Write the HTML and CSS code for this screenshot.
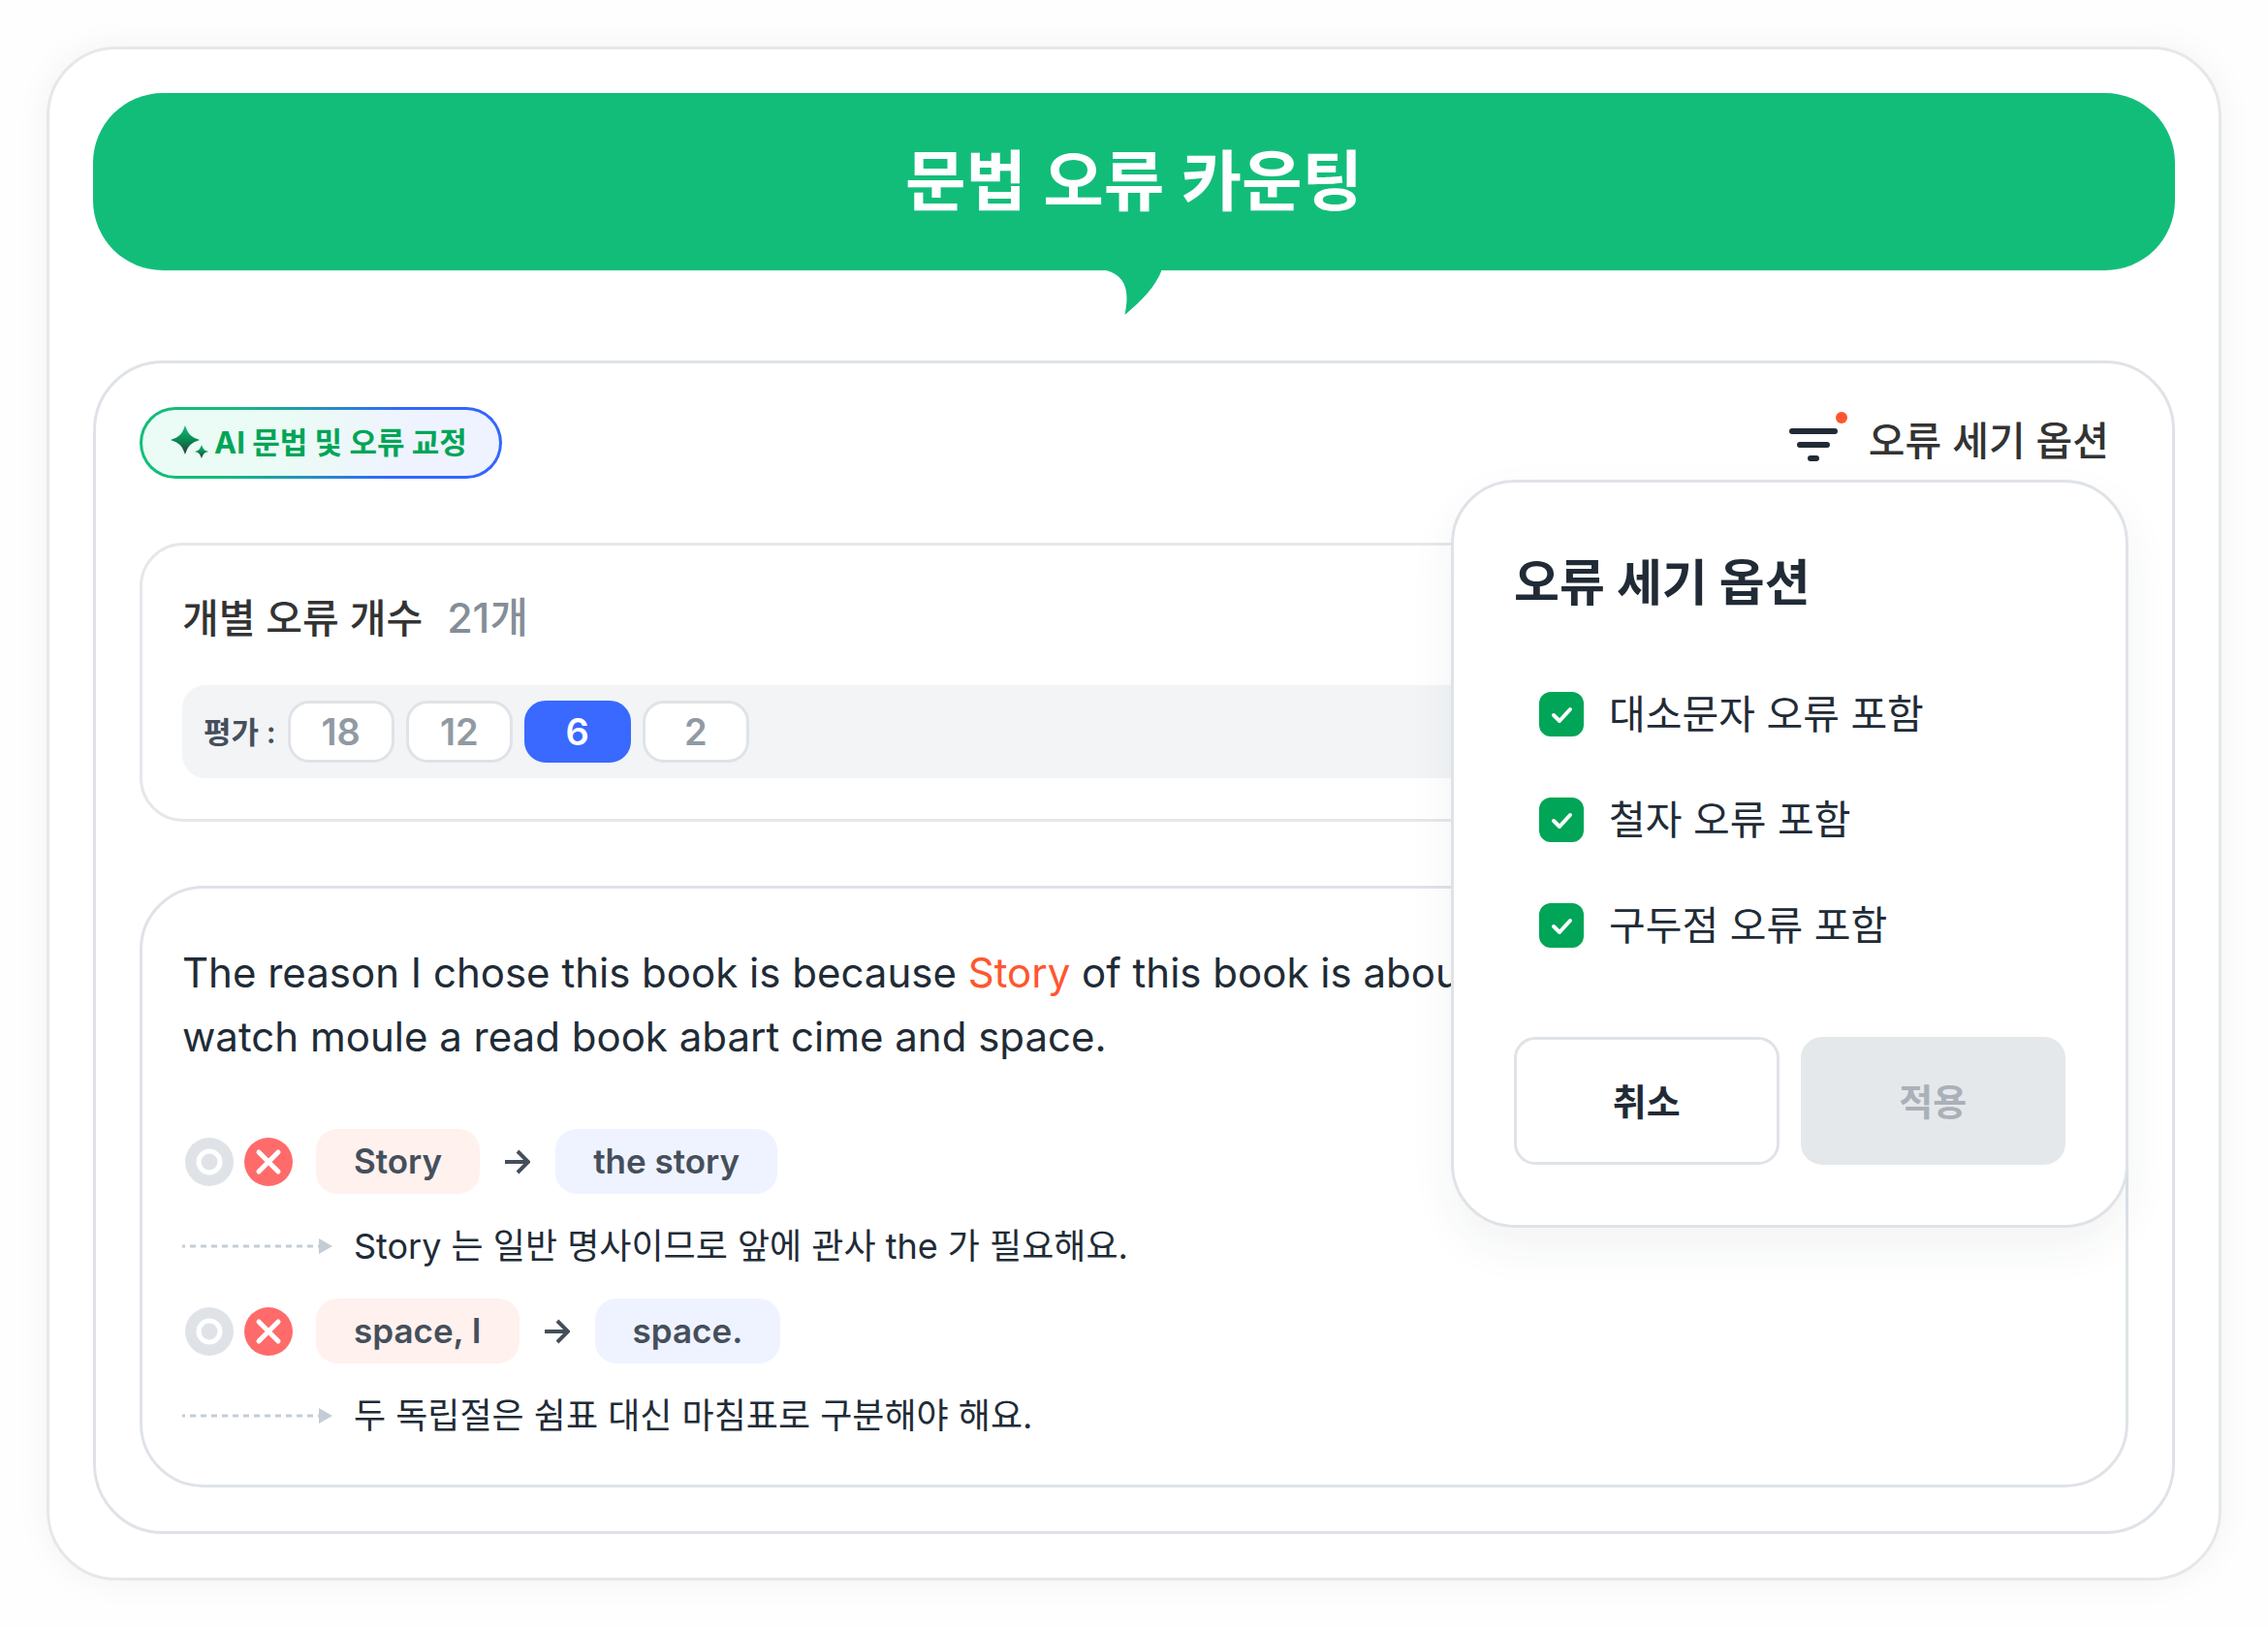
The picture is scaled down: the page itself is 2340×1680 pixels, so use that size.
FILE: index.html
```html
<!DOCTYPE html>
<html lang="ko">
<head>
    <meta charset="UTF-8">
    <meta name="viewport" content="width=device-width, initial-scale=1.0">
    <title>문법 오류 카운팅</title>
    <link rel="stylesheet" href="styles.css">
</head>

<body>
    <main class="frame">
        <header class="banner">
            <h1>문법 오류 카운팅</h1>
            <svg class="banner-tail" width="57" height="46" viewBox="0 0 57 46" aria-hidden="true">
                <path d="M0 0C14 4 21 13 21 29C21 35 20 40 19 46C37 31 51 16 57 0Z" fill="#12bd7a"/>
            </svg>
        </header>

        <section class="panel">
            <div class="toolbar">
                <div class="ai-badge">
                    <svg width="40" height="36" viewBox="0 0 40 36" aria-hidden="true">
                        <defs>
                            <linearGradient id="spark" x1="0" y1="0" x2="0" y2="1">
                                <stop offset="0" stop-color="#12bd7a"/>
                                <stop offset="0.5" stop-color="#078a52"/>
                                <stop offset="1" stop-color="#34373e"/>
                            </linearGradient>
                        </defs>
                        <path d="M15 0C18 9 21 12 30 15C21 18 18 21 15 30C12 21 9 18 0 15C9 12 12 9 15 0Z" fill="url(#spark)"/>
                        <path d="M32 20C34 25 35 26 39 27C35 28 34 29 32 34C30 29 29 28 25 27C29 26 30 25 32 20Z" fill="url(#spark)"/>
                    </svg>
                    <span>AI 문법 및 오류 교정</span>
                </div>

                <button type="button" class="option-toggle">
                    <svg width="60" height="52" viewBox="0 0 60 52" aria-hidden="true">
                        <path d="M3 20H47M11 34H39M22 48H28" stroke="#212b36" stroke-width="6" stroke-linecap="round"/>
                        <circle cx="54" cy="6" r="6" fill="#ff5630"/>
                    </svg>
                    오류 세기 옵션
                </button>

                <form class="option-popover">
                    <h2>오류 세기 옵션</h2>
                    <div class="option-list">
                        <label class="option">
                            <input type="checkbox" checked>
                            <svg width="46" height="46" viewBox="0 0 46 46" aria-hidden="true"><path d="M15 24L21 30L32 18"/></svg>
                            <span>대소문자 오류 포함</span>
                        </label>
                        <label class="option">
                            <input type="checkbox" checked>
                            <svg width="46" height="46" viewBox="0 0 46 46" aria-hidden="true"><path d="M15 24L21 30L32 18"/></svg>
                            <span>철자 오류 포함</span>
                        </label>
                        <label class="option">
                            <input type="checkbox" checked>
                            <svg width="46" height="46" viewBox="0 0 46 46" aria-hidden="true"><path d="M15 24L21 30L32 18"/></svg>
                            <span>구두점 오류 포함</span>
                        </label>
                    </div>
                    <div class="option-actions">
                        <button type="button" class="cancel-button">취소</button>
                        <button type="submit" class="apply-button" disabled>적용</button>
                    </div>
                </form>
            </div>

            <section class="count-card">
                <h2>개별 오류 개수 <span class="count-total">21개</span></h2>
                <div class="score-bar">
                    <span class="score-label">평가 :</span>
                    <button type="button" class="score">18</button>
                    <button type="button" class="score">12</button>
                    <button type="button" class="score selected">6</button>
                    <button type="button" class="score">2</button>
                </div>
            </section>

            <section class="text-card">
                <p class="essay">The reason I chose this book is because <span class="error">Story</span> of this book is about<br>
                watch moule a read book abart cime and space.</p>

                <div class="correction">
                    <button type="button" class="mark" aria-label="맞음">
                        <svg width="50" height="50" viewBox="0 0 50 50"><circle cx="25" cy="25" r="25" fill="#dfe3e8"/><circle cx="25" cy="25" r="11" fill="none" stroke="#fff" stroke-width="5"/></svg>
                    </button>
                    <button type="button" class="mark" aria-label="틀림">
                        <svg width="50" height="50" viewBox="0 0 50 50"><circle cx="25" cy="25" r="25" fill="#ff6b6b"/><path d="M15 15L35 35M35 15L15 35" stroke="#fff" stroke-width="5" stroke-linecap="round"/></svg>
                    </button>
                    <span class="word before">Story</span>
                    <svg class="arrow" width="26" height="26" viewBox="0 0 26 26" aria-hidden="true"><path d="M0 13H24M13 2L24 13L13 24"/></svg>
                    <span class="word after">the story</span>
                </div>
                <p class="reason">
                    <svg width="155" height="16" viewBox="0 0 155 16" aria-hidden="true"><path d="M0 8H141" stroke="#c4cdd5" stroke-width="3" stroke-dasharray="6 5" stroke-dashoffset="3"/><path d="M141 0L155 8L141 16Z" fill="#c4cdd5"/></svg>
                    <span>Story 는 일반 명사이므로 앞에 관사 the 가 필요해요.</span>
                </p>

                <div class="correction">
                    <button type="button" class="mark" aria-label="맞음">
                        <svg width="50" height="50" viewBox="0 0 50 50"><circle cx="25" cy="25" r="25" fill="#dfe3e8"/><circle cx="25" cy="25" r="11" fill="none" stroke="#fff" stroke-width="5"/></svg>
                    </button>
                    <button type="button" class="mark" aria-label="틀림">
                        <svg width="50" height="50" viewBox="0 0 50 50"><circle cx="25" cy="25" r="25" fill="#ff6b6b"/><path d="M15 15L35 35M35 15L15 35" stroke="#fff" stroke-width="5" stroke-linecap="round"/></svg>
                    </button>
                    <span class="word before">space, I</span>
                    <svg class="arrow" width="26" height="26" viewBox="0 0 26 26" aria-hidden="true"><path d="M0 13H24M13 2L24 13L13 24"/></svg>
                    <span class="word after">space.</span>
                </div>
                <p class="reason">
                    <svg width="155" height="16" viewBox="0 0 155 16" aria-hidden="true"><path d="M0 8H141" stroke="#c4cdd5" stroke-width="3" stroke-dasharray="6 5" stroke-dashoffset="3"/><path d="M141 0L155 8L141 16Z" fill="#c4cdd5"/></svg>
                    <span>두 독립절은 쉼표 대신 마침표로 구분해야 해요.</span>
                </p>
            </section>
        </section>
    </main>
</body>
</html>
```
FILE: styles.css
```css
* {
    box-sizing: border-box;
}

body {
    margin: 0;
    padding: 48px;
    background-color: #fefefe;
    color: #212b36;
    font-family: Inter, "Noto Sans CJK KR", sans-serif;
}

h1, h2, p {
    margin: 0;
}

button {
    font-family: inherit;
    padding: 0;
    border: none;
    background: none;
    cursor: pointer;
}

svg {
    display: block;
    flex-shrink: 0;
}

.frame {
    padding: 45px;
    background-color: white;
    border: 3px solid #e5e8eb;
    border-radius: 72px;
    box-shadow: 0 0 36px rgba(0, 0, 0, 0.05);
}

/* green speech bubble */
.banner {
    position: relative;
    padding: 46px;
    margin-bottom: 93px;
    background-color: #12bd7a;
    border-radius: 72px;
    color: white;
    text-align: center;
}

.banner h1 {
    font-size: 68px;
    font-weight: 600;
    line-height: 91px;
}

.banner-tail {
    position: absolute;
    top: 100%;
    left: 50%;
    transform: translateX(-50%);
}

.panel {
    display: flex;
    flex-direction: column;
    gap: 66px;
    padding: 45px;
    border: 3px solid #dfe3e8;
    border-radius: 72px;
}

.toolbar {
    position: relative;
    display: flex;
    justify-content: space-between;
    align-items: center;
}

.ai-badge {
    display: flex;
    align-items: center;
    gap: 5px;
    padding: 0 33px 0 29px;
    border: 3px solid transparent;
    border-radius: 38px;
    background: linear-gradient(100deg, #ebfbf5 40%, #eff3ff 75%) padding-box,
                linear-gradient(100deg, #12bd7a 25%, #3366ff 70%) border-box;
    color: #00a557;
    font-size: 31px;
    font-weight: 700;
    line-height: 68px;
}

.option-toggle {
    display: flex;
    align-items: center;
    gap: 22px;
    margin: 0 20px 4px 0;
    color: #333;
    font-size: 41px;
    font-weight: 500;
    line-height: 60px;
}

.option-toggle svg {
    margin-bottom: 8px;
}

.option-popover {
    position: absolute;
    top: 75px;
    right: 0;
    width: 699px;
    padding: 62px;
    background-color: white;
    border: 3px solid #dfe3e8;
    border-radius: 66px;
    box-shadow: 0 20px 48px rgba(33, 43, 54, 0.06);
}

.option-popover h2 {
    font-size: 51px;
    font-weight: 700;
    line-height: 84px;
}

.option-list {
    display: flex;
    flex-direction: column;
    gap: 49px;
    padding: 63px 24px 85px 26px;
}

.option {
    display: grid;
    grid-template-columns: 46px 1fr;
    column-gap: 26px;
    align-items: center;
    font-size: 41px;
    line-height: 60px;
    cursor: pointer;
}

.option input {
    grid-area: 1 / 1;
    appearance: none;
    width: 46px;
    height: 46px;
    margin: 0;
    border: 3px solid #00a557;
    border-radius: 12px;
}

.option input:checked {
    background-color: #00a557;
}

.option svg {
    grid-area: 1 / 1;
    z-index: 1;
    pointer-events: none;
    fill: none;
    stroke: white;
    stroke-width: 4;
    stroke-linecap: round;
    stroke-linejoin: round;
}

.option-actions {
    display: grid;
    grid-template-columns: 1fr 1fr;
    gap: 22px;
}

.cancel-button,
.apply-button {
    height: 132px;
    padding-bottom: 4px;
    border-radius: 22px;
    font-size: 38px;
    font-weight: 700;
}

.cancel-button {
    border: 3px solid #dfe3e8;
    color: #212b36;
}

.apply-button {
    background-color: #e4e8eb;
    color: #abb0b8;
}

.count-card {
    padding: 42px 41px;
    border: 3px solid #e5e8eb;
    border-radius: 45px;
}

.count-card h2 {
    margin-bottom: 37px;
    color: #333;
    font-size: 41px;
    font-weight: 500;
    line-height: 64px;
}

.count-total {
    margin-left: 14px;
    color: #848e98;
    font-size: 43px;
}

.score-bar {
    display: flex;
    align-items: center;
    gap: 12px;
    padding: 16px 22px;
    background-color: #f2f4f6;
    border-radius: 24px;
}

.score-label {
    padding-bottom: 4px;
    color: #454f5b;
    font-size: 31px;
    font-weight: 600;
}

.score {
    width: 110px;
    height: 64px;
    background-color: white;
    border: 3px solid #dfe3e8;
    border-radius: 22px;
    color: #919aa3;
    font-size: 38px;
    font-weight: 600;
}

.score.selected {
    background-color: #3969ff;
    border-color: #3969ff;
    color: white;
}

.text-card {
    padding: 54px 41px 38px;
    border: 3px solid #dfe3e8;
    border-radius: 66px;
}

.essay {
    margin-bottom: 62px;
    font-size: 42px;
    line-height: 66px;
}

.error {
    color: #ff5630;
}

.correction {
    display: flex;
    align-items: center;
    padding-left: 3px;
}

.mark {
    margin-right: 11px;
    border-radius: 50%;
}

.word {
    padding: 0 39px;
    border-radius: 22px;
    color: #454f5b;
    font-size: 35px;
    font-weight: 600;
    line-height: 67px;
}

.before {
    margin-left: 13px;
    background-color: #fff1ee;
}

.after {
    background-color: #eff3ff;
}

.arrow {
    margin: 0 26px;
    fill: none;
    stroke: #454f5b;
    stroke-width: 4;
}

.reason {
    display: flex;
    align-items: center;
    gap: 22px;
    margin: 21px 0;
    font-size: 36px;
    line-height: 66px;
}

.reason:last-child {
    margin-bottom: 0;
}
```
